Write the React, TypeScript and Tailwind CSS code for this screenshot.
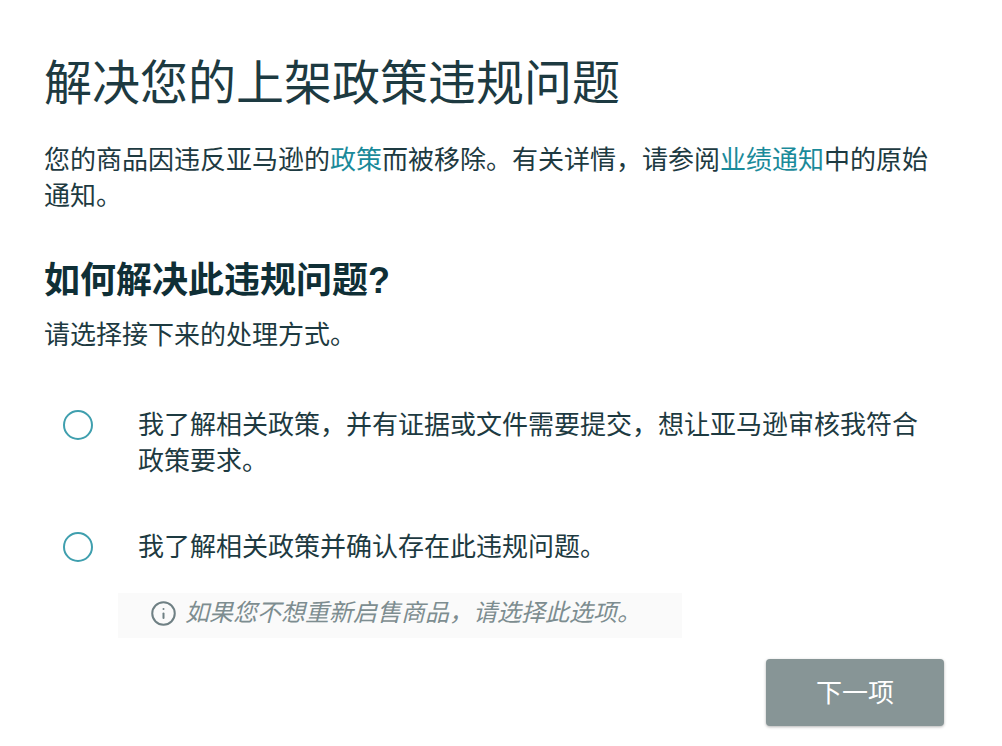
import { Info } from "lucide-react";

const font = "font-['Liberation_Sans','Noto_Sans_CJK_SC',sans-serif]";

function RadioOption({ children }: { children: React.ReactNode }) {
  return (
    <label className="flex items-start">
      <span className="ml-[19px] mt-[3px] h-[30px] w-[30px] shrink-0 rounded-full border-2 border-[#3f9fae] bg-white" />
      <span className="ml-[45px] pr-[4px] text-[26px] leading-[36px]">{children}</span>
    </label>
  );
}

export default function App() {
  return (
    <div className={`${font} h-[746px] w-[1002px] overflow-hidden bg-white pl-[44px] pr-[58px] pt-[52px] text-[#1d3a41]`}>
      <h1 className="text-[48px] font-normal leading-[64px]">解决您的上架政策违规问题</h1>
      <p className="mt-[26px] text-[26px] leading-[36px]">
        您的商品因违反亚马逊的<a className="text-[#1a8a9a]">政策</a>而被移除。有关详情，请参阅
        <a className="text-[#1a8a9a]">业绩通知</a>中的原始通知。
      </p>
      <h2 className="mt-[43px] text-[36px] font-bold leading-[48px] text-[#0f2f36]">如何解决此违规问题?</h2>
      <p className="mt-[12px] text-[26px] leading-[36px]">请选择接下来的处理方式。</p>

      <div className="mt-[54px] flex flex-col gap-[50px]">
        <RadioOption>我了解相关政策，并有证据或文件需要提交，想让亚马逊审核我符合政策要求。</RadioOption>
        <RadioOption>我了解相关政策并确认存在此违规问题。</RadioOption>
      </div>

      <div className="ml-[74px] mt-[28px] flex h-[45px] w-[564px] items-center bg-[#fafafa] pb-[5px] pl-[32px] text-[24px] italic text-[#7d8d90]">
        <Info className="mr-[9px] h-[27px] w-[27px] shrink-0 text-[#6f8084]" strokeWidth={1.8} />
        <span className="-ml-[1px]">如果您不想重新启售商品，请选择此选项。</span>
      </div>

      <div className="mt-[21px] flex justify-end">
        <button
          type="button"
          className="h-[67px] w-[178px] rounded-[4px] bg-[#879596] pt-[1px] text-[26px] text-white shadow-[0_1px_3px_rgba(0,0,0,0.3)]"
        >
          下一项
        </button>
      </div>
    </div>
  );
}
